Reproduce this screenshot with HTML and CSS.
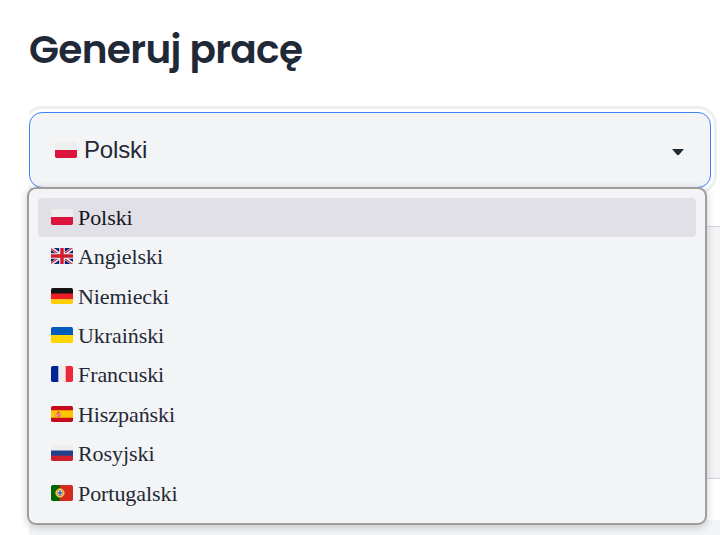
FILE: index.html
```html
<!DOCTYPE html>
<html lang="pl">
<head>
<meta charset="utf-8">
<title>Generuj pracę</title>
<link rel="stylesheet" href="styles.css">
</head>
<body>
<svg class="defs" aria-hidden="true">
  <defs>
    <clipPath id="round"><rect width="22" height="16" rx="1.8"/></clipPath>
    <symbol id="pl" viewBox="0 0 22 16"><g clip-path="url(#round)"><path fill="#eee" d="M0 0h22v8H0z"/><path fill="#dc143c" d="M0 8h22v8H0z"/></g></symbol>
    <symbol id="gb" viewBox="0 0 22 16"><g clip-path="url(#round)"><path fill="#00247d" d="M0 0h22v16H0z"/><path stroke="#eee" stroke-width="3.2" d="M0 0l22 16M22 0L0 16"/><path stroke="#cf1b2b" stroke-width="1.1" d="M0 .7l22 16M22-.7L0 15.3"/><path stroke="#eee" stroke-width="5.6" d="M11 0v16M0 8h22"/><path stroke="#cf1b2b" stroke-width="3.4" d="M11 0v16M0 8h22"/></g></symbol>
    <symbol id="de" viewBox="0 0 22 16"><g clip-path="url(#round)"><path fill="#141414" d="M0 0h22v6H0z"/><path fill="#ed1f24" d="M0 5.5h22v6H0z"/><path fill="#ffcd05" d="M0 11.2h22V16H0z"/></g></symbol>
    <symbol id="ua" viewBox="0 0 22 16"><g clip-path="url(#round)"><path fill="#005bbb" d="M0 0h22v8H0z"/><path fill="#ffd500" d="M0 8h22v8H0z"/></g></symbol>
    <symbol id="fr" viewBox="0 0 22 16"><g clip-path="url(#round)"><path fill="#002495" d="M0 0h8v16H0z"/><path fill="#eee" d="M7.3 0h8v16h-8z"/><path fill="#ed2939" d="M14.7 0H22v16h-7.3z"/></g></symbol>
    <symbol id="es" viewBox="0 0 22 16"><g clip-path="url(#round)"><path fill="#c60a1d" d="M0 0h22v16H0z"/><path fill="#ffc400" d="M0 4.3h22v7.4H0z"/><path fill="#ea596e" d="M5.7 7h3.6v3.2q-1.8 1.5-3.6 0z"/><path fill="#c43b3b" d="M6 5.7h3v1H6z"/><path fill="#b9a98b" d="M4.4 7h.8v4h-.8zM9.9 7h.8v4h-.8z"/><path fill="#f4a2b2" d="M7.5 7.2h1.4v1.2H7.5zM6 8.7h1.4v1.2H6z"/></g></symbol>
    <symbol id="ru" viewBox="0 0 22 16"><g clip-path="url(#round)"><path fill="#eee" d="M0 0h22v6H0z"/><path fill="#22408c" d="M0 5.4h22v5.6H0z"/><path fill="#ce2028" d="M0 10.7h22V16H0z"/></g></symbol>
    <symbol id="pt" viewBox="0 0 22 16"><g clip-path="url(#round)"><path fill="#060" d="M0 0h9v16H0z"/><path fill="#d52b1e" d="M8.8 0H22v16H8.8z"/><circle cx="9" cy="8" r="4.2" fill="#fde25c" stroke="#dfae3a"/><path fill="#d52b1e" d="M6.4 5.2h5.2v4.5q-2.6 2.8-5.2 0z"/><path fill="#eee" d="M6.8 5.6h4.4v3.8Q9 11.7 6.8 9.4z"/><path stroke="#1a47a0" stroke-width="1.2" d="M9 5.7v4.6M7 7.9h4"/></g></symbol>
  </defs>
</svg>
<main class="page">
  <h1 class="title">Generuj pracę</h1>
  <div class="field">
    <div class="clip">
      <div class="select">
        <svg class="flag"><use href="#pl"/></svg>
        <span class="value">Polski</span>
        <svg class="caret" viewBox="0 0 12 6"><path d="M0 0h12L6.8 6H5.2z"/></svg>
      </div>
    </div>
    <ul class="menu">
      <li class="option active"><svg class="flag"><use href="#pl"/></svg>Polski</li>
      <li class="option"><svg class="flag"><use href="#gb"/></svg>Angielski</li>
      <li class="option"><svg class="flag"><use href="#de"/></svg>Niemiecki</li>
      <li class="option"><svg class="flag"><use href="#ua"/></svg>Ukraiński</li>
      <li class="option"><svg class="flag"><use href="#fr"/></svg>Francuski</li>
      <li class="option"><svg class="flag"><use href="#es"/></svg>Hiszpański</li>
      <li class="option"><svg class="flag"><use href="#ru"/></svg>Rosyjski</li>
      <li class="option"><svg class="flag"><use href="#pt"/></svg>Portugalski</li>
    </ul>
  </div>
  <div class="textarea"></div>
  <div class="footer"></div>
</main>
</body>
</html>
```

FILE: styles.css
```css
* { box-sizing: border-box; }
body {
  margin: 0;
  height: 535px;
  overflow: hidden;
  background: #fff;
  color: #1f2937;
}
.defs { position: absolute; width: 0; height: 0; }
.page { padding: 25px 0 0 29px; }
.title {
  margin: 0;
  height: 75px;
  font: 600 39px/50px Poppins, Inter, sans-serif;
  font-feature-settings: "cv11", "ss03";
  letter-spacing: -0.64px;
  white-space: nowrap;
}
.field { position: relative; }
.clip {
  width: 691px;
  padding: 12px 0 6px;
  height: 94px;
  overflow: hidden;
}
.select {
  display: flex;
  align-items: center;
  width: 682px;
  height: 76px;
  padding: 0 26px 0 25px;
  border: 1px solid #3b82f6;
  border-radius: 13px;
  background: #f3f4f6;
  box-shadow: 0 0 0 3px #fff, 0 0 0 6px #eeeff0;
}
.flag { flex: none; width: 22px; height: 16px; }
.value {
  flex: 1;
  margin-left: 7px;
  font: 24px/30px "Liberation Sans", sans-serif;
  letter-spacing: -0.15px;
}
.caret { width: 12px; height: 6px; margin-top: 4px; fill: #1f2937; }
.menu {
  position: absolute;
  z-index: 1;
  top: 87px;
  left: -2px;
  width: 680px;
  height: 338px;
  margin: 0;
  padding: 9px;
  border: 2px solid #9e9e9f;
  border-radius: 9px;
  background: #f3f4f6;
  box-shadow: 0 2px 8px rgba(0, 0, 0, .2);
  list-style: none;
}
.option {
  display: flex;
  align-items: center;
  height: 39.45px;
  padding-left: 13px;
  border-radius: 4px;
  font: 22px/30px "Liberation Serif", serif;
  letter-spacing: -0.07px;
}
.option .flag { margin: 0 5px 2px 0; }
.option.active { background: #e1e0e6; color: #15141a; }
.textarea {
  height: 253px;
  margin-top: 32px;
  border: 1px solid #d1d5db;
  border-right: 0;
  background: #f3f4f6;
}
.footer { height: 15px; margin-top: 41px; background: #f3f4f6; }
```
